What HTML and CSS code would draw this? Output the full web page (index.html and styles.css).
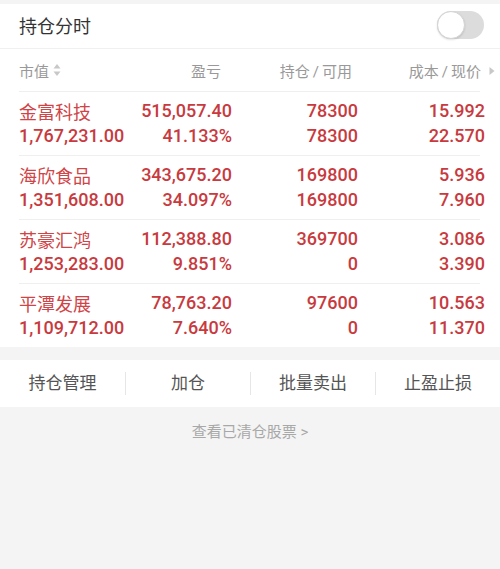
FILE: index.html
```html
<!DOCTYPE html>
<html lang="zh">
<head>
<meta charset="utf-8">
<link rel="stylesheet" href="styles.css">
</head>
<body>
<div class="page">
  <div class="panel">
    <div class="title-bar">
      <span class="title">持仓分时</span>
      <span class="toggle"><span class="knob"></span></span>
    </div>
    <div class="col-head">
      <span class="h1">市值<svg class="sort" width="8" height="14" viewBox="0 0 8 14"><path d="M4 1 L7.5 5.5 H0.5 Z" fill="#c8c8c8"/><path d="M4 13 L7.5 8.5 H0.5 Z" fill="#c8c8c8"/></svg></span>
      <span class="h2">盈亏</span>
      <span class="h3">持仓<span class="sl">/</span>可用</span>
      <span class="h4">成本<span class="sl">/</span>现价<svg class="more" width="6" height="10" viewBox="0 0 6 10"><path d="M0.5 1 L5.5 5 L0.5 9 Z" fill="#c8c8c8"/></svg></span>
    </div>
    <div class="row">
      <span class="name">金富科技</span><span class="num">515,057.40</span><span class="num">78300</span><span class="num">15.992</span>
      <span class="val">1,767,231.00</span><span class="num">41.133%</span><span class="num">78300</span><span class="num">22.570</span>
    </div>
    <div class="row">
      <span class="name">海欣食品</span><span class="num">343,675.20</span><span class="num">169800</span><span class="num">5.936</span>
      <span class="val">1,351,608.00</span><span class="num">34.097%</span><span class="num">169800</span><span class="num">7.960</span>
    </div>
    <div class="row">
      <span class="name">苏豪汇鸿</span><span class="num">112,388.80</span><span class="num">369700</span><span class="num">3.086</span>
      <span class="val">1,253,283.00</span><span class="num">9.851%</span><span class="num">0</span><span class="num">3.390</span>
    </div>
    <div class="row last">
      <span class="name">平潭发展</span><span class="num">78,763.20</span><span class="num">97600</span><span class="num">10.563</span>
      <span class="val">1,109,712.00</span><span class="num">7.640%</span><span class="num">0</span><span class="num">11.370</span>
    </div>
  </div>
  <div class="actions">
    <span class="act">持仓管理</span>
    <span class="act">加仓</span>
    <span class="act">批量卖出</span>
    <span class="act">止盈止损</span>
  </div>
  <div class="footer">查看已清仓股票 &gt;</div>
</div>
</body>
</html>
```

FILE: styles.css
```css
* { box-sizing: border-box; }
html, body { margin: 0; padding: 0; }
body {
  background: #f4f4f4;
  font-family: Roboto, "Noto Sans CJK SC", sans-serif;
  width: 500px;
  height: 569px;
  overflow: hidden;
}
.page { padding-top: 4px; }
.panel { background: #fff; }
.title-bar {
  height: 45px;
  display: flex;
  align-items: center;
  justify-content: space-between;
  padding: 0 16px 0 19px;
  border-bottom: 1px solid #f0f0f0;
}
.title { font-size: 18px; color: #333; margin-top: -3px; }
.toggle {
  width: 47px;
  height: 28px;
  border-radius: 14px;
  background: #dcdcdc;
  display: flex;
  align-items: center;
  margin-top: -2px;
}
.knob {
  width: 28px;
  height: 28px;
  border-radius: 50%;
  background: #fff;
  border: 1px solid #d4d4d4;
  box-shadow: 0 1px 2px rgba(0,0,0,0.12);
}
.col-head {
  height: 43px;
  margin: 0 20px 0 19px;
  border-bottom: 1px solid #efefef;
  display: grid;
  grid-template-columns: 100px 102px 131px 129px;
  align-items: center;
  font-size: 15px;
  color: #999;
}
.h1 { display: flex; align-items: center; }
.sort { margin-left: 4px; }
.h2, .h3, .h4 { text-align: right; }
.sl { margin: 0 3px; }
.h4 { position: relative; }
.more { position: absolute; right: -14px; top: 6px; }
.row {
  margin: 0 20px 0 19px;
  padding: 6px 0 7px;
  border-bottom: 1px solid #efefef;
  display: grid;
  grid-template-columns: 100px 113px 126px 127px;
  grid-auto-rows: 25px;
  align-items: center;
  color: #c83a3e;
  font-size: 18px;
  font-weight: 500;
  white-space: nowrap;
}
.row.last { border-bottom: none; }
.name { font-size: 18px; font-weight: 400; color: #cf4447; }
.num { text-align: right; }
.actions {
  margin-top: 13px;
  background: #fff;
  height: 47px;
  display: grid;
  grid-template-columns: repeat(4, 1fr);
  align-items: center;
}
.act {
  text-align: center;
  font-size: 17px;
  color: #555;
  line-height: 23px;
  border-left: 1px solid #e6e6e6;
}
.act:first-child { border-left: none; }
.footer {
  text-align: center;
  font-size: 15px;
  color: #a8a8a8;
  padding-top: 13px;
}
```
